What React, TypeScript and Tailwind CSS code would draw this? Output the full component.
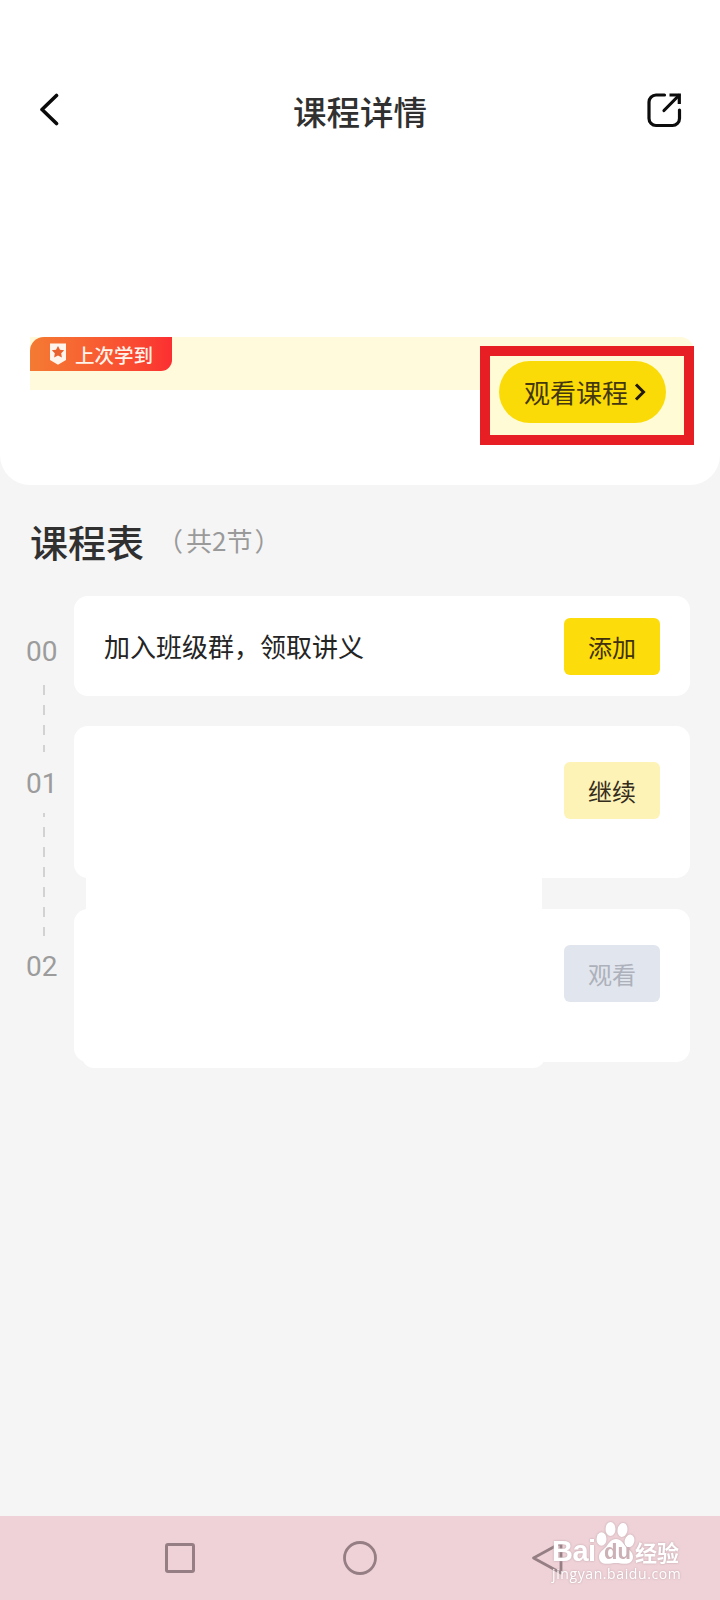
import clsx from 'clsx'

const lessons = [
  {
    no: '00',
    title: '加入班级群，领取讲义',
    action: '添加',
    card: 'h-[100px] pt-[22px]',
    button: 'bg-[#fddc0b] text-[#40310c]',
  },
  {
    no: '01',
    title: '',
    action: '继续',
    card: 'h-[152px] pt-9',
    button: 'bg-[#fdf3b6] text-[#352c1c]',
  },
  {
    no: '02',
    title: '',
    action: '观看',
    card: 'h-[153px] pt-9',
    button: 'bg-[#e1e5ed] text-[#adb1bb]',
  },
]

function BackIcon() {
  return (
    <svg width="22" height="34" viewBox="0 0 22 34" fill="none" stroke="#0a0a0a" strokeWidth="3.6" strokeLinecap="round" strokeLinejoin="round">
      <path d="M18.500 2.500 4 16.500l14.500 14" />
    </svg>
  )
}

function ShareIcon() {
  return (
    <svg width="36" height="36" viewBox="0 0 36 36" fill="none" stroke="#0c0c0c" strokeWidth="3.2" strokeLinecap="round">
      <path d="M18.500 3H10a7 7 0 0 0-7 7v16.500a7 7 0 0 0 7 7h16.500a7 7 0 0 0 7-7V18" />
      <path d="M23.500 3h9.800V12" strokeLinecap="butt" />
      <path d="M32.800 3.500 18 18.500" />
    </svg>
  )
}

function BadgeIcon() {
  return (
    <svg width="18" height="22" viewBox="0 0 18 22">
      <path d="M1 .5h16V17l-8 4.800L1 17z" fill="#fff5ec" />
      <path d="m9 3 2 3.800 4.200.5-3 2.900.7 4.300L9 12.500l-3.900 2 .7-4.300-3-2.900 4.200-.5z" fill="#e9612f" />
    </svg>
  )
}

function Header() {
  return (
    <header className="flex h-[128px] items-end justify-between pl-[38px] pr-[38px]">
      <div className="w-9 pb-px">
        <BackIcon />
      </div>
      <h1 className="mb-[-5px] text-[33.500px] leading-[44px] text-[#303030] font-[450]">课程详情</h1>
      <ShareIcon />
    </header>
  )
}

function LastWatched() {
  return (
    <section className="mt-[209px] ml-[30px] mr-[26px] flex h-[53px] items-start justify-between rounded-tr-[14px] bg-[#fffadb]">
      <div className="flex h-[34px] w-[142px] items-center rounded-tl-[14px] rounded-br-[11px] bg-gradient-to-r from-[#f47a32] to-[#fb2e31] pl-[19px]">
        <BadgeIcon />
        <span className="ml-2 pt-px text-[19.500px] leading-[34px] font-[450] text-[#fff3ea]">上次学到</span>
      </div>
      <div className="mt-[9px] flex h-[99px] w-[214px] shrink-0 border-[10px] border-[#e71f25] bg-[#fffbd5] pl-[9px] pt-[5px]">
        <button className="flex h-[62px] w-[167px] items-center rounded-full bg-[#fadb08] pl-[25px] pb-[2px] text-[26px] text-[#44370d]">
          观看课程
          <svg className="ml-[6px] mt-px" width="13" height="18" viewBox="0 0 13 18" fill="none" stroke="#211900" strokeWidth="3">
            <path d="m2 1.500 7.500 7.500L2 16.500" />
          </svg>
        </button>
      </div>
    </section>
  )
}

function Timeline() {
  return (
    <aside className="flex w-[74px] flex-col font-[Roboto] text-[28px] leading-[28px] font-[450] text-[#9c9c9c]">
      <span className="mt-[42px] pl-[26px]">00</span>
      <svg className="mt-[19px] ml-[42px]" width="4" height="67" stroke="#d2d2d2" strokeWidth="2">
        <path d="M2 0V67" strokeDasharray="10 10" />
      </svg>
      <span className="mt-[18px] pl-[26px]">01</span>
      <svg className="mt-[15px] ml-[42px]" width="4" height="123" stroke="#d2d2d2" strokeWidth="2">
        <path d="M2 0V123" strokeDasharray="10 10" strokeDashoffset="6" />
      </svg>
      <span className="mt-[17px] pl-[26px]">02</span>
    </aside>
  )
}

function LessonList() {
  return (
    <div className="flex">
      <Timeline />
      <div className="flex w-[616px] flex-col">
        {lessons.map((lesson, i) => (
          <div key={lesson.no}>
            <div className={clsx('flex items-start justify-between rounded-[14px] bg-white px-[30px]', lesson.card)}>
              <p className="mt-2 text-[26px] leading-[40px] font-normal text-[#242424]">{lesson.title}</p>
              <button className={clsx('h-[57px] w-24 rounded-md text-[24px] leading-[57px]', lesson.button)}>
                {lesson.action}
              </button>
            </div>
            {i === 0 && <div className="h-[30px]" />}
            {i === 1 && <div className="ml-[12px] h-[31px] w-[456px] bg-white" />}
            {i === 2 && <div className="-mt-3 ml-[8px] h-[18px] w-[463px] rounded-b-[12px] bg-white" />}
          </div>
        ))}
      </div>
    </div>
  )
}

function Watermark() {
  return (
    <div className="absolute top-[5px] left-[552px] w-[132px] text-white [filter:drop-shadow(0_0_1px_#bda5aa)]">
      <div className="flex h-[43px] items-end">
        <span className="w-[44px] font-[Liberation_Sans] text-[29px] leading-[26px] font-bold tracking-[-0.500px]">Bai</span>
        <div className="relative h-[43px] w-[39px]">
          <svg width="39" height="43" viewBox="0 0 39 43" fill="white">
            <ellipse cx="5.500" cy="18" rx="5" ry="6.800" />
            <ellipse cx="14.500" cy="8" rx="5" ry="7" />
            <ellipse cx="26.500" cy="9" rx="5" ry="7" transform="rotate(10 26.500 9)" />
            <ellipse cx="33.500" cy="20" rx="4.800" ry="6.500" transform="rotate(15 33.500 20)" />
            <path d="M20 18c-5 0-7 4-10 8-3 3-7 5-7 10S7 43 11 42.800c3 0 6-.8 9-.8s6 .8 9 .8c4 0 8-2 8-6.800s-4-7-7-10c-3-4-5-8-10-8z" />
          </svg>
          <span className="absolute bottom-[2px] left-[8px] font-[Liberation_Sans] text-[22px] leading-[21px] font-bold text-[#cbb0b6]">du</span>
        </div>
        <span className="text-[22px] leading-[26px] font-bold">经验</span>
      </div>
      <div className="mt-px font-['Open_Sans'] text-[14px] leading-[18px] tracking-[0.600px] whitespace-nowrap">jingyan.baidu.com</div>
    </div>
  )
}

function SystemNav() {
  return (
    <nav className="relative h-[84px] bg-[#efd2d8]">
      <div className="flex h-[84px] items-center pl-[164px]">
        <svg width="32" height="34" fill="none" stroke="#957f84" strokeWidth="3">
          <rect x="2.500" y="3.500" width="27" height="27" rx="1.500" />
        </svg>
        <svg className="ml-[146px]" width="36" height="36" fill="none" stroke="#957f84" strokeWidth="2.800">
          <circle cx="18" cy="18" r="15.500" />
        </svg>
        <svg className="ml-[153px]" width="32" height="36" fill="none" stroke="#957f84" strokeWidth="2.800" strokeLinejoin="round">
          <path d="M2.500 18 30 3v30z" />
        </svg>
      </div>
      <Watermark />
    </nav>
  )
}

export default function App() {
  return (
    <div className="flex h-[1600px] w-[720px] flex-col overflow-hidden bg-[#f5f5f5] font-['Noto_Sans_CJK_SC',sans-serif]">
      <div className="h-[485px] shrink-0 rounded-b-[30px] bg-white">
        <Header />
        <LastWatched />
      </div>
      <main className="flex-1">
        <div className="flex h-[111px] items-center pl-[30px]">
          <h2 className="text-[38px] leading-[56px] font-medium text-[#303030]">课程表</h2>
          <div className="ml-[13px] pb-[2px] text-[26px] text-[#9a9a9a]">
            <span>（</span>
            <span className="ml-[3px] mr-[2px]">共2节</span>
            <span>）</span>
          </div>
        </div>
        <LessonList />
      </main>
      <SystemNav />
    </div>
  )
}
